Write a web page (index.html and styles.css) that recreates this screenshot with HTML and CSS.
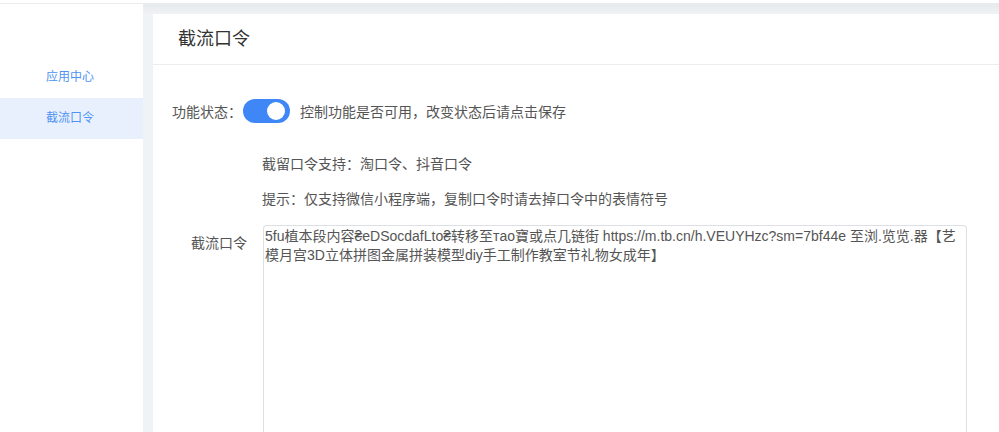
FILE: index.html
```html
<!DOCTYPE html>
<html lang="zh-CN">
<head>
<meta charset="utf-8">
<title>截流口令</title>
<link rel="stylesheet" href="styles.css">
</head>
<body>
<div class="topbar"></div>
<div class="layout">
  <aside class="sidebar">
    <div class="nav-item">应用中心</div>
    <div class="nav-item active">截流口令</div>
  </aside>
  <main class="main">
    <section class="card">
      <header class="card-header">截流口令</header>
      <div class="card-body">
        <div class="row-switch">
          <span class="switch-label">功能状态：</span>
          <span class="switch"><span class="knob"></span></span>
          <span class="switch-desc">控制功能是否可用，改变状态后请点击保存</span>
        </div>
        <p class="tip tip-first">截留口令支持：淘口令、抖音口令</p>
        <p class="tip">提示：仅支持微信小程序端，复制口令时请去掉口令中的表情符号</p>
        <div class="row-field">
          <label class="field-label" for="cmd">截流口令</label>
          <textarea id="cmd" class="field-input">5fu植本段内容₴eDSocdafLto₴转移至тao寶或点几链街 https://m.tb.cn/h.VEUYHzc?sm=7bf44e 至浏.览览.器【艺模月宫3D立体拼图金属拼装模型diy手工制作教室节礼物女成年】</textarea>
        </div>
      </div>
    </section>
  </main>
</div>
</body>
</html>
```
FILE: styles.css
```css
* { box-sizing: border-box; }
html, body { margin: 0; padding: 0; }
body {
  font-family: "Liberation Sans", "Noto Sans CJK SC", sans-serif;
  background: #fff;
  color: #333;
  height: 432px;
  overflow: hidden;
}
.topbar {
  height: 4px;
  border-bottom: 1px solid #e9ecee;
}
.layout {
  display: flex;
  height: 428px;
  overflow: hidden;
}
.sidebar {
  width: 143px;
  flex: none;
  background: #fff;
  padding-top: 53px;
}
.nav-item {
  height: 41px;
  line-height: 41px;
  padding-left: 46px;
  font-size: 12px;
  color: #4f93f3;
}
.nav-item.active {
  background: #e8f0fd;
}
.main {
  flex: 1;
  background: #f0f3f5;
  background-image: linear-gradient(#e6eaec, #f0f3f5 10px);
  padding: 10px 0 0 10px;
  overflow: hidden;
}
.card {
  background: #fff;
  height: 100%;
  overflow: hidden;
}
.card-header {
  height: 51px;
  line-height: 50px;
  padding-left: 25px;
  font-size: 18px;
  color: #333;
  border-bottom: 1px solid #ebeef0;
}
.card-body {
  padding: 34px 19px 0;
  font-size: 14px;
  color: #555;
}
.row-switch {
  display: flex;
  align-items: center;
  height: 24px;
}
.switch-label {
  width: 71px;
  flex: none;
}
.switch {
  width: 47px;
  height: 24px;
  border-radius: 12px;
  background: #3f87f7;
  position: relative;
  flex: none;
}
.knob {
  position: absolute;
  right: 5px;
  top: 3px;
  width: 18px;
  height: 18px;
  border-radius: 50%;
  background: #fff;
}
.switch-desc {
  margin-left: 10px;
}
.tip {
  margin: 15px 0 0 90px;
  line-height: 20px;
}
.tip-first {
  margin-top: 31px;
}
.row-field {
  display: flex;
  margin-top: 16px;
}
.field-label {
  width: 91px;
  flex: none;
  text-align: right;
  padding-right: 16px;
  padding-top: 8px;
  line-height: 20px;
}
.field-input {
  width: 704px;
  height: 207px;
  border: 1px solid #dcdfe3;
  border-bottom: none;
  border-radius: 4px 4px 0 0;
  padding: 1px 1px;
  font-family: "Liberation Sans", "Noto Sans CJK SC", sans-serif;
  font-size: 14px;
  line-height: 19px;
  color: #555;
  resize: none;
  outline: none;
}
```
